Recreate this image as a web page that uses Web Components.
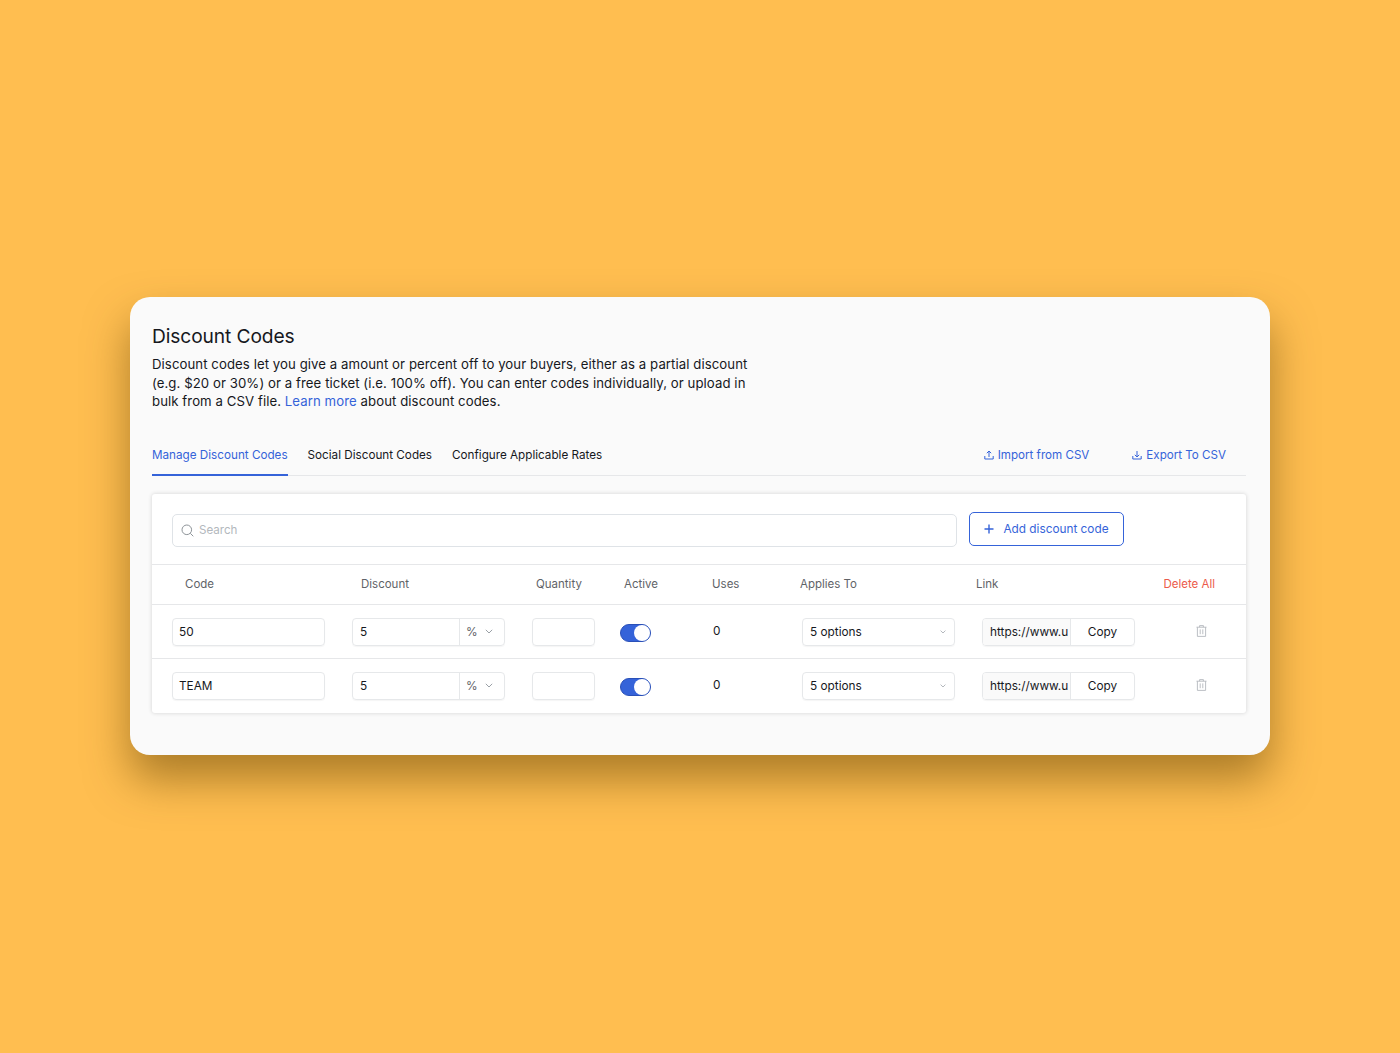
<!DOCTYPE html>
<html>
<head>
<meta charset="utf-8">
<title>Discount Codes</title>
<style>
  html, body { margin: 0; height: 100%; }
  body {
    box-sizing: border-box;
    padding-bottom: 1px;
    background: #ffbe50;
    display: flex;
    align-items: center;
    justify-content: center;
    font-family: "Inter", "Liberation Sans", sans-serif;
  }
</style>
</head>
<body>

<discount-card>
  <span slot="title">Discount Codes</span>
  Discount codes let you give a amount or percent off to your buyers, either as a partial discount
  (e.g. $20 or 30%) or a free ticket (i.e. 100% off). You can enter codes individually, or upload in
  bulk from a CSV file. <a href="#">Learn more</a> about discount codes.
  <tab-bar slot="tabs"></tab-bar>
  <code-table slot="table">
    <code-row code="50"></code-row>
    <code-row code="TEAM"></code-row>
  </code-table>
</discount-card>

<script>
const trashIcon = `<svg width="11" height="12" viewBox="0 0 11 12" fill="none" stroke="#b4b8bd" stroke-width=".9"><path d="M.5 2.2h10M3.6 2.2V.6h3.8v1.6M1.4 2.2v9.2h8.2V2.2M4.2 4.4v4.8M6.8 4.4v4.8"/></svg>`;
const chevron = `<svg width="8" height="5" viewBox="0 0 8 5" fill="none" stroke="#9aa0a6" stroke-width="1"><path d="M.8.8 4 4l3.2-3.2"/></svg>`;
const smallChevron = `<svg width="6" height="4" viewBox="0 0 6 4" fill="none" stroke="#b4b8bd" stroke-width="1"><path d="M.6.6 3 3 5.4.6"/></svg>`;

class DiscountCard extends HTMLElement {
  constructor() {
    super();
    this.attachShadow({ mode: "open" });
    this.shadowRoot.innerHTML = `
      <style>
        :host {
          display: block;
          box-sizing: border-box;
          width: 1140px;
          height: 458px;
          padding: 26px 24px 0 22px;
          background: #fafafa;
          border-radius: 20px;
          box-shadow: 0 24px 44px rgba(90, 60, 0, .5);
          color: #16181d;
        }
        h1 { margin: 0 0 6px; font-size: 19.2px; line-height: 26px; font-weight: 400; letter-spacing: -.1px; }
        .intro { width: 612px; font-size: 13.2px; line-height: 18.5px; letter-spacing: .07px; }
        ::slotted(a) { color: #3563d9; text-decoration: none; }
      </style>
      <h1><slot name="title"></slot></h1>
      <div class="intro"><slot></slot></div>
      <slot name="tabs"></slot>
      <slot name="table"></slot>`;
  }
}

class TabBar extends HTMLElement {
  constructor() {
    super();
    this.attachShadow({ mode: "open" });
    this.shadowRoot.innerHTML = `
      <style>
        :host {
          display: flex;
          align-items: stretch;
          height: 40px;
          margin: 24px 0 18px;
          border-bottom: 1px solid #e6e7e9;
          font-size: 11.7px;
          color: #16181d;
        }
        .tab { display: flex; align-items: center; margin-right: 20px; padding-top: 1px; box-sizing: border-box; }
        .on { color: #3563d9; border-bottom: 2px solid #3563d9; margin-bottom: -1px; }
        .act { display: flex; align-items: center; gap: 4px; color: #3563d9; font-size: 11.6px; }
        .act svg { stroke: #3563d9; }
        .gap { flex: 1; }
        .act + .act { margin: 0 20px 0 43px; }
      </style>
      <div class="tab on">Manage Discount Codes</div>
      <div class="tab">Social Discount Codes</div>
      <div class="tab">Configure Applicable Rates</div>
      <div class="gap"></div>
      <div class="act"><svg width="10" height="10" viewBox="0 0 10 10" fill="none" stroke-width="1"><path d="M5 7V1M2.8 3.2 5 1l2.2 2.2M.8 6v3h8.4V6"/></svg>Import from CSV</div>
      <div class="act"><svg width="10" height="10" viewBox="0 0 10 10" fill="none" stroke-width="1"><path d="M5 1v6M2.8 4.8 5 7l2.2-2.2M.8 6v3h8.4V6"/></svg>Export To CSV</div>`;
  }
}

class CodeTable extends HTMLElement {
  constructor() {
    super();
    this.attachShadow({ mode: "open" });
    this.shadowRoot.innerHTML = `
      <style>
        :host {
          display: block;
          background: #fff;
          border-radius: 3px;
          box-shadow: 0 0 4px rgba(0, 0, 0, .16);
          font-size: 12px;
        }
        .top { display: flex; align-items: center; gap: 12px; height: 71px; padding-left: 20px; box-sizing: border-box; border-bottom: 1px solid #e6e7e9; }
        .search {
          width: 785px; height: 33px; margin-top: 3px; box-sizing: border-box; padding-left: 8px;
          display: flex; align-items: center; gap: 5px;
          border: 1px solid #dfe3e7; border-radius: 5px; color: #b3b8bd;
          font-size: 11.6px;
        }
        .add {
          width: 155px; height: 34px; box-sizing: border-box;
          display: flex; align-items: center; justify-content: center; gap: 9px;
          border: 1px solid #3563d9; border-radius: 5px; color: #3563d9;
          font-size: 11.8px;
        }
        .head {
          display: grid;
          grid-template-columns: 176px 175px 88px 88px 88px 176px 1fr auto;
          align-items: center;
          height: 40px;
          box-sizing: border-box;
          padding: 0 31px 0 33px;
          border-bottom: 1px solid #e6e7e9;
          color: #5f6368;
          font-size: 11.5px;
        }
        .del { color: #ec5a4a; }
      </style>
      <div class="top">
        <div class="search"><svg width="13" height="13" viewBox="0 0 13 13" fill="none" stroke="#8e9499" stroke-width="1"><circle cx="5.8" cy="5.8" r="4.8"/><path d="m9.3 9.3 3 3"/></svg>Search</div>
        <div class="add"><svg width="10" height="10" viewBox="0 0 10 10" fill="none" stroke="#3563d9" stroke-width="1.4"><path d="M5 .5v9M.5 5h9"/></svg>Add discount code</div>
      </div>
      <div class="head">
        <span>Code</span><span>Discount</span><span>Quantity</span><span>Active</span><span>Uses</span><span>Applies To</span><span>Link</span><span class="del">Delete All</span>
      </div>
      <slot></slot>`;
  }
}

class CodeRow extends HTMLElement {
  constructor() {
    super();
    this.attachShadow({ mode: "open" });
    this.shadowRoot.innerHTML = `
      <style>
        :host {
          display: grid;
          grid-template-columns: 180px 180px 88px 92px 90px 180px 214px 11px;
          align-items: center;
          height: 54px;
          box-sizing: border-box;
          padding-left: 20px;
          font-size: 11.8px;
          color: #16181d;
        }
        :host(:not(:last-child)) { border-bottom: 1px solid #e6e7e9; padding-top: 1px; }
        .box {
          height: 28px; box-sizing: border-box;
          display: flex; align-items: center;
          border: 1px solid #e6e8ea; border-radius: 4px;
          box-shadow: 0 1px 1px rgba(0, 0, 0, .04);
          overflow: hidden;
        }
        .w153 { width: 153px; }
        .txt { padding-left: 6px; }
        .unit { flex: 1; min-width: 0; padding-left: 7px; }
        .pct {
          width: 45px; height: 100%; box-sizing: border-box; padding: 0 11px 0 6px;
          display: flex; align-items: center; justify-content: space-between;
          border-left: 1px solid #e6e8ea; color: #5f6368;
        }
        .qty { width: 63px; }
        .toggle { width: 31px; height: 18px; box-sizing: border-box; margin-top: 2px; border-radius: 9px; background: #3563d9; border: 1px solid #2a50b8; position: relative; }
        .toggle i { position: absolute; right: 0; top: 0; width: 16px; height: 16px; border-radius: 50%; background: #fff; }
        .uses { padding-left: 1px; margin-top: -2px; }
        .sel { justify-content: space-between; padding: 0 8px 0 7px; }
        .url { width: 88px; height: 100%; box-sizing: border-box; padding-left: 7px; white-space: nowrap; overflow: hidden; background: #fafafa; border-right: 1px solid #e6e8ea; display: flex; align-items: center; }
        .copy { flex: 1; text-align: center; }
        svg { display: block; }
        .trash { margin-top: -2px; }
      </style>
      <div class="box w153"><span class="txt" id="code"></span></div>
      <div class="box w153"><span class="unit">5</span><span class="pct">%${chevron}</span></div>
      <div class="box qty"></div>
      <div class="toggle"><i></i></div>
      <div class="uses">0</div>
      <div class="box w153 sel"><span>5 options</span>${smallChevron}</div>
      <div class="box w153"><span class="url">https://www.u</span><span class="copy">Copy</span></div>
      <div class="trash">${trashIcon}</div>`;
  }
  connectedCallback() {
    this.shadowRoot.getElementById("code").textContent = this.getAttribute("code");
  }
}

customElements.define("discount-card", DiscountCard);
customElements.define("tab-bar", TabBar);
customElements.define("code-table", CodeTable);
customElements.define("code-row", CodeRow);
</script>
</body>
</html>
